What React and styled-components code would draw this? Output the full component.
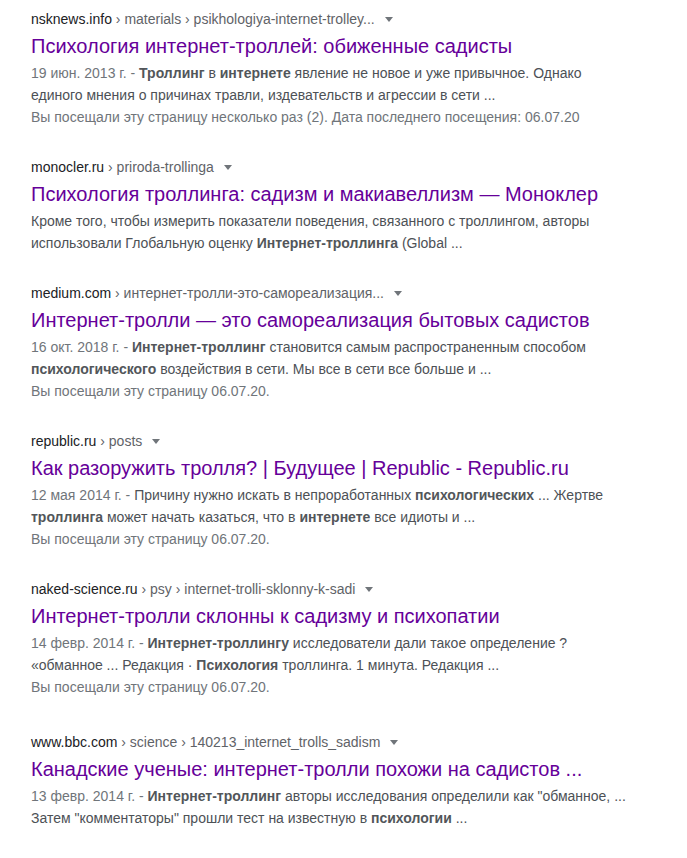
import React from "react"
import styled, { createGlobalStyle } from "styled-components"

const GlobalStyle = createGlobalStyle`
  html, body {
    margin: 0;
    padding: 0;
    background: #fff;
  }
  body {
    font-family: "Liberation Sans", Arial, sans-serif;
  }
`

const Results = styled.div`
  padding: 10px 0 0 31px;
  width: 640px;
`

const Result = styled.div`
  padding-top: ${({ $shift }) => $shift || 0}px;
  margin-bottom: 30px;
`

const UrlLine = styled.div`
  display: flex;
  align-items: center;
  font-size: 14px;
  line-height: 18px;
  height: 18px;
  white-space: nowrap;
`

const Domain = styled.span`
  color: #202124;
`

const Path = styled.span`
  color: #5f6368;
`

const Arrow = styled.span`
  display: inline-block;
  margin-left: 10px;
  margin-top: 1px;
  border-top: 5px solid #70757a;
  border-left: 4px solid transparent;
  border-right: 4px solid transparent;
`

const Title = styled.h3`
  margin: 0 0 3px;
  padding-top: 5px;
  font-size: 20px;
  line-height: 26px;
  font-weight: 400;
  color: #660099;
  white-space: nowrap;
`

const Snippet = styled.div`
  font-size: 14px;
  line-height: 22px;
  color: #4d5156;
  white-space: nowrap;

  b {
    color: #52565a;
    font-weight: 700;
  }
`

const Date = styled.span`
  color: #70757a;
`

const Visited = styled.div`
  font-size: 14px;
  line-height: 22px;
  color: #70757a;
`

const results = [
  {
    domain: "nsknews.info",
    path: "› materials › psikhologiya-internet-trolley...",
    title: "Психология интернет-троллей: обиженные садисты",
    date: "19 июн. 2013 г.",
    lines: [
      <>
        <b>Троллинг</b> в <b>интернете</b> явление не новое и уже привычное. Однако
      </>,
      <>единого мнения о причинах травли, издевательств и агрессии в сети ...</>,
    ],
    visited: "Вы посещали эту страницу несколько раз (2). Дата последнего посещения: 06.07.20",
  },
  {
    domain: "monocler.ru",
    path: "› priroda-trollinga",
    title: "Психология троллинга: садизм и макиавеллизм — Моноклер",
    lines: [
      <>Кроме того, чтобы измерить показатели поведения, связанного с троллингом, авторы</>,
      <>
        использовали Глобальную оценку <b>Интернет-троллинга</b> (Global ...
      </>,
    ],
  },
  {
    domain: "medium.com",
    path: "› интернет-тролли-это-самореализация...",
    title: "Интернет-тролли — это самореализация бытовых садистов",
    date: "16 окт. 2018 г.",
    lines: [
      <>
        <b>Интернет-троллинг</b> становится самым распространенным способом
      </>,
      <>
        <b>психологического</b> воздействия в сети. Мы все в сети все больше и ...
      </>,
    ],
    visited: "Вы посещали эту страницу 06.07.20.",
  },
  {
    domain: "republic.ru",
    path: "› posts",
    title: "Как разоружить тролля? | Будущее | Republic - Republic.ru",
    date: "12 мая 2014 г.",
    lines: [
      <>
        Причину нужно искать в непроработанных <b>психологических</b> ... Жертве
      </>,
      <>
        <b>троллинга</b> может начать казаться, что в <b>интернете</b> все идиоты и ...
      </>,
    ],
    visited: "Вы посещали эту страницу 06.07.20.",
  },
  {
    domain: "naked-science.ru",
    path: "› psy › internet-trolli-sklonny-k-sadi",
    title: "Интернет-тролли склонны к садизму и психопатии",
    date: "14 февр. 2014 г.",
    lines: [
      <>
        <b>Интернет-троллингу</b> исследователи дали такое определение ?
      </>,
      <>
        «обманное ... Редакция · <b>Психология</b> троллинга. 1 минута. Редакция ...
      </>,
    ],
    visited: "Вы посещали эту страницу 06.07.20.",
  },
  {
    domain: "www.bbc.com",
    path: "› science › 140213_internet_trolls_sadism",
    title: "Канадские ученые: интернет-тролли похожи на садистов ...",
    date: "13 февр. 2014 г.",
    shift: 5,
    lines: [
      <>
        <b>Интернет-троллинг</b> авторы исследования определили как "обманное, ...
      </>,
      <>
        Затем "комментаторы" прошли тест на известную в <b>психологии</b> ...
      </>,
    ],
  },
]

function SearchResult({ item }) {
  return (
    <Result $shift={item.shift}>
      <UrlLine>
        <Domain>{item.domain}</Domain>
        <Path>&nbsp;{item.path}</Path>
        <Arrow />
      </UrlLine>
      <Title>{item.title}</Title>
      <Snippet>
        {item.date && <Date>{item.date} - </Date>}
        {item.lines[0]}
        <br />
        {item.lines[1]}
      </Snippet>
      {item.visited && <Visited>{item.visited}</Visited>}
    </Result>
  )
}

export default function App() {
  return (
    <>
      <GlobalStyle />
      <Results>
        {results.map((item) => (
          <SearchResult key={item.domain} item={item} />
        ))}
      </Results>
    </>
  )
}
